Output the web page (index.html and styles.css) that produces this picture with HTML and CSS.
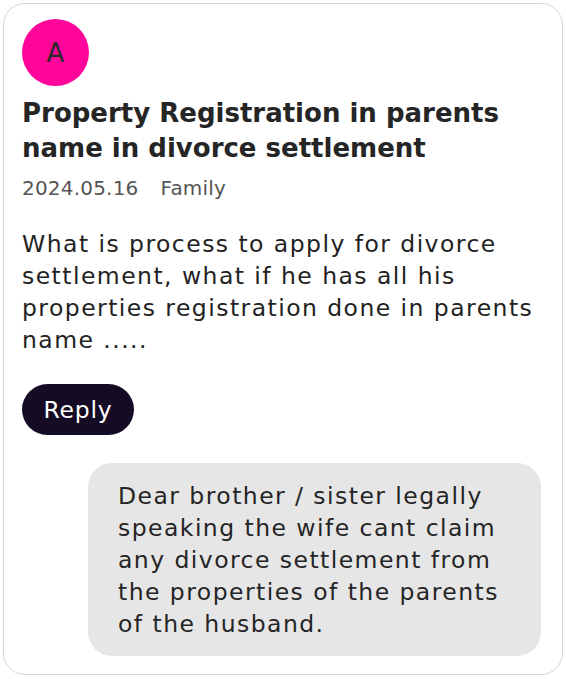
FILE: index.html
```html
<!DOCTYPE html>
<html lang="en">
<head>
<meta charset="utf-8">
<title>Question</title>
<link rel="stylesheet" href="styles.css">
</head>
<body>
<div class="page">
  <article class="card">
    <div class="avatar">A</div>
    <h1 class="title">Property Registration in parents name in divorce settlement</h1>
    <div class="meta"><span>2024.05.16</span><span>Family</span></div>
    <p class="body">What is process to apply for divorce settlement, what if he has all his properties registration done in parents name .....</p>
    <button class="reply">Reply</button>
    <div class="answer">Dear brother / sister legally speaking the wife cant claim any divorce settlement from the properties of the parents of the husband.</div>
  </article>
</div>
</body>
</html>
```

FILE: styles.css
```css
html, body {
  margin: 0;
  padding: 0;
  background: #ffffff;
}
.page {
  padding: 3px;
  font-family: "DejaVu Sans", "Open Sans", sans-serif;
  color: #222222;
}
.card {
  box-sizing: border-box;
  width: 560px;
  height: 672px;
  border: 1.5px solid #d6d6d6;
  border-radius: 22px;
  padding: 15px 18px 0 18px;
  display: flex;
  flex-direction: column;
  align-items: flex-start;
}
.avatar {
  width: 67px;
  height: 67px;
  border-radius: 50%;
  background: #ff0599;
  color: #2a2a2a;
  font-size: 26px;
  display: flex;
  align-items: center;
  justify-content: center;
}
.title {
  margin: 10px 0 0 0;
  font-size: 26px;
  line-height: 35px;
  font-weight: 700;
  color: #252525;
}
.meta {
  margin-top: 8px;
  display: flex;
  gap: 22px;
  font-size: 20px;
  line-height: 28px;
  letter-spacing: 0.2px;
  color: #555555;
}
.body {
  margin: 26px 0 0 0;
  font-size: 23.5px;
  line-height: 32px;
  letter-spacing: 1.45px;
  color: #222222;
}
.reply {
  margin-top: 28px;
  width: 112px;
  height: 51px;
  border: none;
  border-radius: 26px;
  background: #150b25;
  color: #ffffff;
  font-family: inherit;
  font-size: 23.5px;
  letter-spacing: 0.8px;
  padding: 0;
}
.answer {
  margin: 28px 0 0 66px;
  box-sizing: border-box;
  width: 453px;
  padding: 17px 20px 16px 30px;
  background: #e6e6e6;
  border-radius: 24px;
  font-size: 23.5px;
  line-height: 32px;
  letter-spacing: 1.45px;
  color: #252525;
}
```
